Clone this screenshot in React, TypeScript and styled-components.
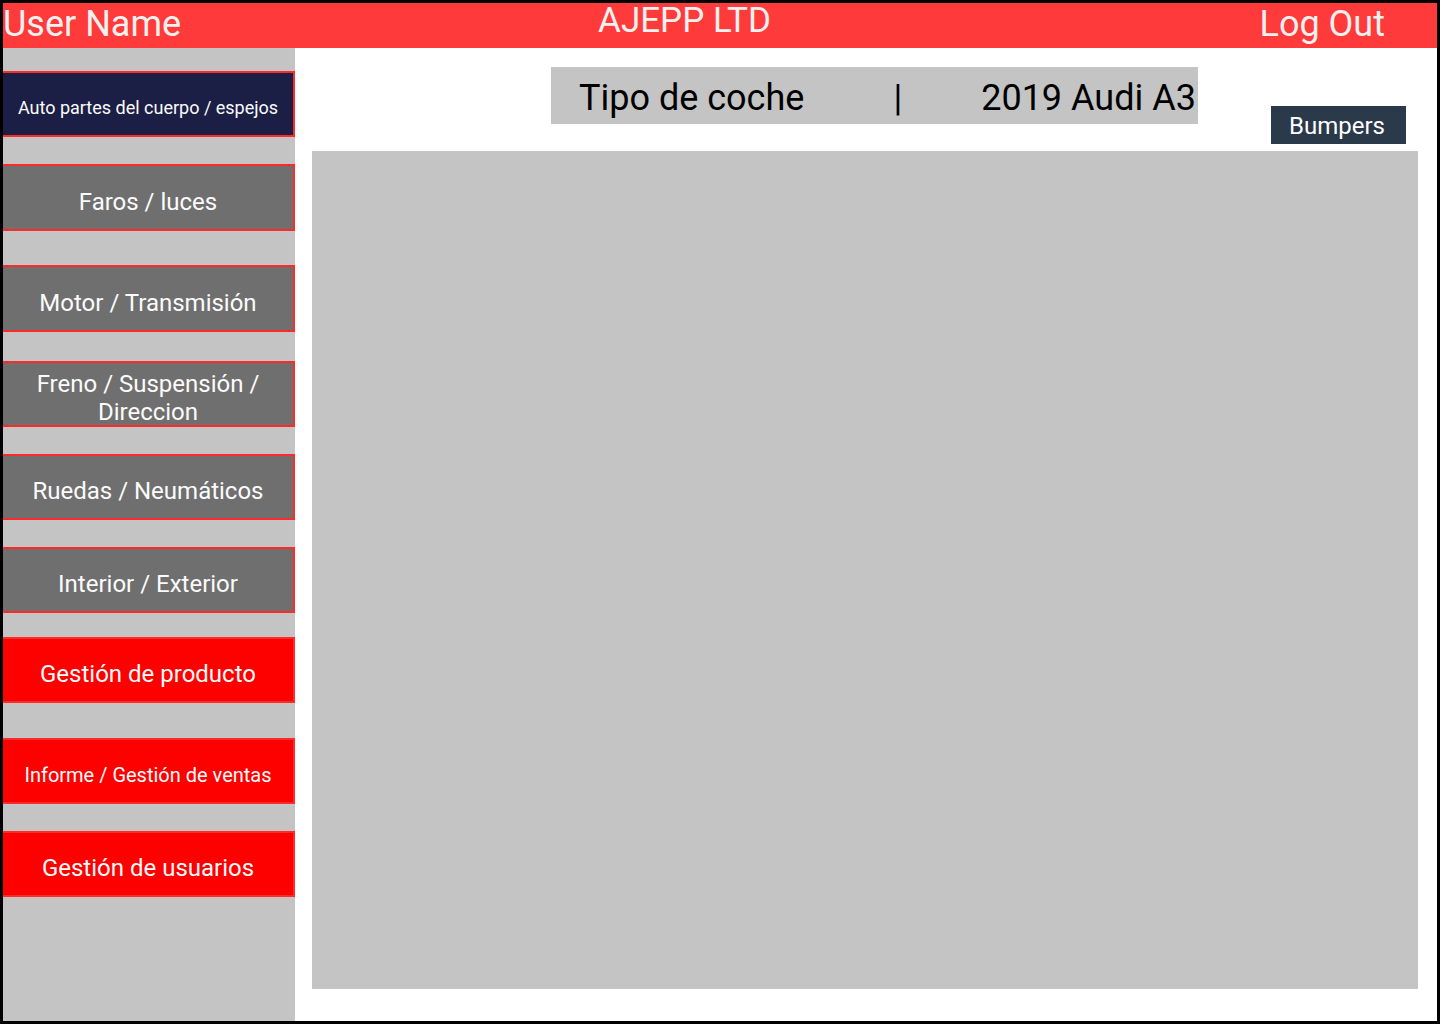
import React from "react";
import styled, { createGlobalStyle } from "styled-components";

const Global = createGlobalStyle`
  html, body { margin: 0; padding: 0; background: #000; }
  body { font-family: Roboto, "Liberation Sans", sans-serif; }
  * { box-sizing: border-box; }
`;

const Frame = styled.div`
  width: 1440px;
  height: 1024px;
  border: 3px solid #000;
  background: #fff;
  display: flex;
  flex-direction: column;
  overflow: hidden;
`;

const Header = styled.header`
  height: 45px;
  flex: none;
  background: #ff3a3b;
  color: #f3f0f0;
  display: flex;
  align-items: flex-start;
  padding-right: 52px;
`;

const UserName = styled.div`
  font-size: 36px;
  line-height: 36px;
  padding-top: 3px;
  white-space: nowrap;
`;

const Brand = styled.div`
  font-size: 35px;
  line-height: 35px;
  margin-left: 417px;
  white-space: nowrap;
`;

const LogOut = styled.div`
  font-size: 36px;
  line-height: 36px;
  padding-top: 3px;
  margin-left: auto;
  white-space: nowrap;
`;

const Body = styled.div`
  flex: 1;
  display: flex;
  min-height: 0;
`;

const Sidebar = styled.nav`
  width: 292px;
  flex: none;
  background: #c4c4c4;
  display: flex;
  flex-direction: column;
`;

type Tone = "navy" | "grey" | "red";

const bg: Record<Tone, string> = {
  navy: "#1b1f45",
  grey: "#6f6f6f",
  red: "#fd0000",
};

const NavButton = styled.div<{ $tone: Tone; $top: number; $size: number; $h: number }>`
  margin-top: ${(p) => p.$top}px;
  height: ${(p) => p.$h}px;
  background: ${(p) => bg[p.$tone]};
  border: 2px solid #ff2a2a;
  border-left: none;
  color: #fbfbfb;
  font-size: ${(p) => p.$size}px;
  line-height: 28px;
  display: flex;
  align-items: center;
  justify-content: center;
  text-align: center;
  padding: 8px 14px 0;
`;

const Main = styled.main`
  flex: 1;
  display: flex;
  flex-direction: column;
  padding-left: 17px;
`;

const TopRow = styled.div`
  display: flex;
  align-items: flex-start;
  padding-left: 239px;
  padding-top: 19px;
  height: 96px;
`;

const CarType = styled.div`
  width: 647px;
  height: 57px;
  background: #c4c4c4;
  color: #000;
  font-size: 36px;
  line-height: 54px;
  padding-top: 4px;
  padding-left: 28px;
  display: flex;
  white-space: nowrap;
`;

const Divider = styled.span`
  margin-left: 89px;
`;

const Model = styled.span`
  margin-left: 79px;
`;

const Bumpers = styled.div`
  margin-left: 73px;
  margin-top: 39px;
  width: 135px;
  height: 38px;
  background: #2a3a4a;
  color: #fff;
  font-size: 24px;
  line-height: 35px;
  padding-top: 3px;
  padding-right: 3px;
  text-align: center;
`;

const Canvas = styled.div`
  margin-top: 7px;
  width: 1106px;
  height: 838px;
  background: #c4c4c4;
`;

const items: { label: React.ReactNode; tone: Tone; top: number; size: number; h: number }[] = [
  { label: "Auto partes del cuerpo / espejos", tone: "navy", top: 23, size: 18, h: 66 },
  { label: "Faros / luces", tone: "grey", top: 27, size: 24, h: 67 },
  { label: "Motor / Transmisión", tone: "grey", top: 34, size: 24, h: 67 },
  { label: "Freno / Suspensión / Direccion", tone: "grey", top: 29, size: 24, h: 66 },
  { label: "Ruedas / Neumáticos", tone: "grey", top: 27, size: 24, h: 66 },
  { label: "Interior / Exterior", tone: "grey", top: 27, size: 24, h: 66 },
  { label: "Gestión de producto", tone: "red", top: 24, size: 24, h: 66 },
  { label: "Informe / Gestión de ventas", tone: "red", top: 35, size: 20, h: 66 },
  { label: "Gestión de usuarios", tone: "red", top: 27, size: 24, h: 66 },
];

export default function App() {
  return (
    <>
      <Global />
      <Frame>
        <Header>
          <UserName>User Name</UserName>
          <Brand>AJEPP LTD</Brand>
          <LogOut>Log Out</LogOut>
        </Header>
        <Body>
          <Sidebar>
            {items.map((it, i) => (
              <NavButton key={i} $tone={it.tone} $top={it.top} $size={it.size} $h={it.h}>
                {it.label}
              </NavButton>
            ))}
          </Sidebar>
          <Main>
            <TopRow>
              <CarType>
                <span>Tipo de coche</span>
                <Divider>|</Divider>
                <Model>2019 Audi A3</Model>
              </CarType>
              <Bumpers>Bumpers</Bumpers>
            </TopRow>
            <Canvas />
          </Main>
        </Body>
      </Frame>
    </>
  );
}
